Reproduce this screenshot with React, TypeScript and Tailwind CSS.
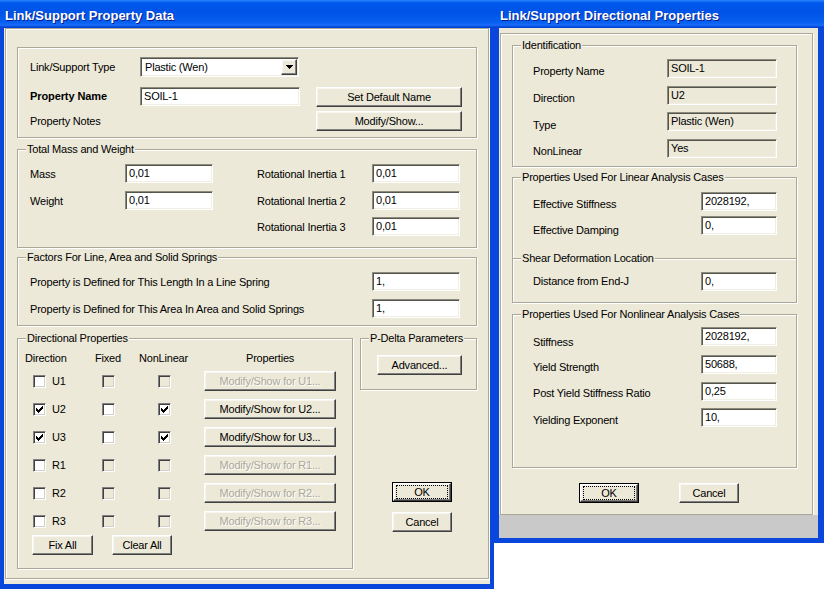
import React from 'react';

type Kids = { children?: React.ReactNode; className?: string };

// classic 7x7 check glyph
const Check = () => (
  <svg width="7" height="7" viewBox="0 0 7 7" className="block" shapeRendering="crispEdges">
    <path d="M0 2h1v3H0zM1 3h1v3H1zM2 4h1v3H2zM3 3h1v3H3zM4 2h1v3H4zM5 1h1v3H5zM6 0h1v3H6z" fill="#000" />
  </svg>
);

const CheckBox = ({ checked = false, disabled = false }: { checked?: boolean; disabled?: boolean }) => (
  <span
    className={`flex h-[13px] w-[13px] shrink-0 items-center justify-center border border-t-[#808080] border-l-[#808080] border-b-white border-r-white shadow-[inset_1px_1px_0_#404040,inset_-1px_-1px_0_#d4d0c8] ${
      disabled ? 'bg-[#ece9d8]' : 'bg-white'
    }`}
  >
    {checked && <Check />}
  </span>
);

const bevel =
  'border border-t-white border-l-white border-b-[#404040] border-r-[#404040] bg-[#ece9d8] shadow-[inset_-1px_-1px_0_#808080,inset_1px_1px_0_#f7f6f0]';

const Button = ({ children, className = '', disabled = false }: Kids & { disabled?: boolean }) => (
  <div className={`flex h-[20px] shrink-0 items-center justify-center ${bevel} ${className}`}>
    <span className={disabled ? 'text-[#aca899] [text-shadow:1px_1px_0_#fff]' : ''}>{children}</span>
  </div>
);

const DefaultButton = ({ children, className = '' }: Kids) => (
  <div className={`h-[20px] shrink-0 border border-black ${className}`}>
    <div className={`flex h-full w-full px-[2px] py-[1px] ${bevel}`}>
      <div className="flex flex-1 items-center justify-center border border-dotted border-black">{children}</div>
    </div>
  </div>
);

const TextBox = ({ value, className = '', readOnly = false }: { value: string; className?: string; readOnly?: boolean }) => (
  <div
    className={`flex h-[19px] shrink-0 items-center border border-t-[#8d8a7e] border-l-[#8d8a7e] border-b-white border-r-white pl-[3px] shadow-[inset_1px_1px_0_#55544d,inset_-1px_-1px_0_#f1efe2] ${
      readOnly ? 'bg-[#ece9d8]' : 'bg-white'
    } ${className}`}
  >
    {value}
  </div>
);

const Combo = ({ value }: { value: string }) => (
  <div className="flex h-[20px] w-[159px] items-center border border-t-[#8d8a7e] border-l-[#8d8a7e] border-b-white border-r-white bg-white p-[1px] shadow-[inset_1px_1px_0_#55544d,inset_-1px_-1px_0_#f1efe2]">
    <span className="flex-1 pl-[3px]">{value}</span>
    <div className={`flex h-[16px] w-[16px] items-center justify-center ${bevel}`}>
      <svg width="7" height="4" viewBox="0 0 7 4" shapeRendering="crispEdges" className="block">
        <path d="M0 0h7v1H0zM1 1h5v1H1zM2 2h3v1H2zM3 3h1v1H3z" fill="#000" />
      </svg>
    </div>
  </div>
);

const etched = 'border border-[#aca899] shadow-[1px_1px_0_#fff,inset_1px_1px_0_#fff]';

const Group = ({ title, className = '', children }: Kids & { title?: string }) => (
  <div className={`relative shrink-0 ${etched} ${className}`}>
    {title && <span className="absolute -top-[7px] left-[8px] bg-[#ece9d8] px-[1px] leading-[13px]">{title}</span>}
    {children}
  </div>
);

const TitleBar = ({ title, className = '' }: { title: string; className?: string }) => (
  <div
    className={`flex h-[28px] shrink-0 items-center pt-[2px] text-[13px] font-bold tracking-normal text-white [text-shadow:1px_1px_0_#0a1d8c] bg-[linear-gradient(180deg,#2a86ff_0%,#0058ee_10%,#0053e6_45%,#0760f0_80%,#1a6cf8_90%,#0048d8_96%,#003dc8_100%)] ${className}`}
  >
    {title}
  </div>
);

const dirRows = [
  { d: 'U1', on: false },
  { d: 'U2', on: true },
  { d: 'U3', on: true },
  { d: 'R1', on: false },
  { d: 'R2', on: false },
  { d: 'R3', on: false },
];

const LeftWindow = () => (
  <div className="flex h-[589px] w-[494px] shrink-0 flex-col bg-[#0846dc]">
    <TitleBar title="Link/Support Property Data" className="pl-[5px]" />
    <div className="mx-[4px] h-[556px] bg-[#ece9d8] pl-[1px]">
      <div className={`h-[551px] w-[484px] pl-[11px] pt-[18px] ${etched}`}>
        {/* type / name */}
        <Group className="h-[91px] w-[460px] pl-[12px] pt-[9px]">
          <div className="flex h-[20px] items-center">
            <span className="w-[110px]">Link/Support Type</span>
            <Combo value="Plastic (Wen)" />
          </div>
          <div className="mt-[10px] flex h-[20px] items-start">
            <span className="flex h-[19px] w-[110px] items-center font-bold tracking-[-0.1px]">Property Name</span>
            <TextBox value="SOIL-1" className="w-[160px]" />
            <Button className="ml-[16px] w-[146px]">Set Default Name</Button>
          </div>
          <div className="mt-[4px] flex h-[20px] items-center">
            <span className="w-[286px] pt-[1px]">Property Notes</span>
            <Button className="w-[146px]">Modify/Show...</Button>
          </div>
        </Group>

        {/* mass */}
        <Group title="Total Mass and Weight" className="mt-[11px] h-[99px] w-[460px] pl-[12px] pt-[14px]">
          {[
            ['Mass', '0,01', 'Rotational Inertia 1', '0,01'],
            ['Weight', '0,01', 'Rotational Inertia 2', '0,01'],
            ['', '', 'Rotational Inertia 3', '0,01'],
          ].map(([l, v, rl, rv], i) => (
            <div key={rl} className={`flex h-[19px] items-center ${i === 1 ? 'mt-[8px]' : i === 2 ? 'mt-[7px]' : ''}`}>
              <div className="flex w-[183px] items-center">
                {l && (
                  <>
                    <span className="w-[95px] pt-[2px]">{l}</span>
                    <TextBox value={v} className="w-[88px]" />
                  </>
                )}
              </div>
              <span className="ml-[44px] w-[115px] pt-[2px]">{rl}</span>
              <TextBox value={rv} className="w-[88px]" />
            </div>
          ))}
        </Group>

        {/* springs */}
        <Group title="Factors For Line, Area and Solid Springs" className="mt-[9px] h-[69px] w-[460px] pl-[12px] pt-[14px]">
          <div className="flex h-[19px] items-center">
            <span className="w-[342px] pt-[2px]">Property is Defined for This Length In a Line Spring</span>
            <TextBox value="1," className="w-[88px]" />
          </div>
          <div className="mt-[8px] flex h-[19px] items-center">
            <span className="w-[342px] pt-[2px]">Property is Defined for This Area In Area and Solid Springs</span>
            <TextBox value="1," className="w-[88px]" />
          </div>
        </Group>

        <div className="mt-[12px] flex items-start">
          <Group title="Directional Properties" className="h-[231px] w-[336px] pt-[12px]">
            <div className="flex h-[14px] items-center pl-[7px]">
              <span className="w-[70px]">Direction</span>
              <span className="w-[44px]">Fixed</span>
              <span className="w-[107px]">NonLinear</span>
              <span>Properties</span>
            </div>
            {dirRows.map((r, i) => (
              <div key={r.d} className={`flex h-[20px] items-center ${i === 0 ? 'mt-[6px]' : 'mt-[8px]'}`}>
                <span className="w-[15px]" />
                <CheckBox checked={r.on} />
                <span className="ml-[6px] w-[50px] pt-[1px]">{r.d}</span>
                <CheckBox disabled={!r.on} />
                <span className="w-[43px]" />
                <CheckBox checked={r.on} disabled={!r.on} />
                <span className="w-[33px]" />
                <Button className="w-[132px]" disabled={!r.on}>
                  Modify/Show for {r.d}...
                </Button>
              </div>
            ))}
            <div className="mt-[4px] flex pl-[14px]">
              <Button className="w-[61px]">Fix All</Button>
              <Button className="ml-[19px] w-[60px]">Clear All</Button>
            </div>
          </Group>

          <div className="ml-[7px] flex w-[117px] flex-col">
            <Group title="P-Delta Parameters" className="h-[52px] w-[117px] pl-[16px] pt-[16px]">
              <Button className="w-[85px]">Advanced...</Button>
            </Group>
            <DefaultButton className="ml-[32px] mt-[92px] w-[60px]">OK</DefaultButton>
            <Button className="ml-[32px] mt-[10px] w-[60px]">Cancel</Button>
          </div>
        </div>
      </div>
    </div>
  </div>
);

const RRow = ({
  label,
  value,
  first,
  mt,
  off,
  labelW,
  tbW,
  readOnly = false,
}: {
  label: string;
  value: string;
  first?: boolean;
  mt: string;
  off: string;
  labelW: string;
  tbW: string;
  readOnly?: boolean;
}) => (
  <div className={`flex h-[19px] items-start ${first ? '' : ''} ${mt}`}>
    <span className={`${labelW} ${off}`}>{label}</span>
    <TextBox value={value} className={tbW} readOnly={readOnly} />
  </div>
);

const RightWindow = () => (
  <div className="flex h-[543px] w-[330px] shrink-0 flex-col bg-[#0846dc]">
    <TitleBar title="Link/Support Directional Properties" className="pl-[6px]" />
    <div className="ml-[5px] mr-[6px] flex flex-col">
      <div className="h-[487px] bg-[#ece9d8] pl-[1px] pt-[5px]">
        <div className={`h-[482px] w-[313px] pl-[11px] pt-[11px] ${etched}`}>
          <Group title="Identification" className="h-[122px] w-[285px] pl-[20px]">
            <RRow label="Property Name" value="SOIL-1" mt="mt-[13px]" off="mt-[6px]" labelW="w-[134px]" tbW="w-[110px]" readOnly />
            <RRow label="Direction" value="U2" mt="mt-[8px]" off="mt-[6px]" labelW="w-[134px]" tbW="w-[110px]" readOnly />
            <RRow label="Type" value="Plastic (Wen)" mt="mt-[7px]" off="mt-[7px]" labelW="w-[134px]" tbW="w-[110px]" readOnly />
            <RRow label="NonLinear" value="Yes" mt="mt-[8px]" off="mt-[6px]" labelW="w-[134px]" tbW="w-[110px]" readOnly />
          </Group>

          <Group title="Properties Used For Linear Analysis Cases" className="mt-[10px] h-[81px] w-[285px] border-b-0 pl-[20px]">
            <RRow label="Effective Stiffness" value="2028192," mt="mt-[14px]" off="mt-[6px]" labelW="w-[168px]" tbW="w-[76px]" />
            <RRow label="Effective Damping" value="0," mt="mt-[5px]" off="mt-[8px]" labelW="w-[168px]" tbW="w-[76px]" />
          </Group>

          <Group title="Shear Deformation Location" className="h-[45px] w-[285px] pl-[20px]">
            <RRow label="Distance from End-J" value="0," mt="mt-[13px]" off="mt-[3px]" labelW="w-[168px]" tbW="w-[76px]" />
          </Group>

          <Group title="Properties Used For Nonlinear Analysis Cases" className="mt-[11px] h-[154px] w-[285px] pl-[20px]">
            <RRow label="Stiffness" value="2028192," mt="mt-[12px]" off="mt-[9px]" labelW="w-[168px]" tbW="w-[76px]" />
            <RRow label="Yield Strength" value="50688," mt="mt-[9px]" off="mt-[6px]" labelW="w-[168px]" tbW="w-[76px]" />
            <RRow label="Post Yield Stiffness Ratio" value="0,25" mt="mt-[8px]" off="mt-[5px]" labelW="w-[168px]" tbW="w-[76px]" />
            <RRow label="Yielding Exponent" value="10," mt="mt-[7px]" off="mt-[6px]" labelW="w-[168px]" tbW="w-[76px]" />
          </Group>

          <div className="ml-[67px] mt-[15px] flex">
            <DefaultButton className="w-[60px]">OK</DefaultButton>
            <Button className="ml-[40px] w-[60px]">Cancel</Button>
          </div>
        </div>
      </div>
      <div className="h-[23px] bg-[#c9c9c9]" />
    </div>
  </div>
);

export default function App() {
  return (
    <div className="flex h-[589px] w-[824px] items-start overflow-hidden bg-white font-['Liberation_Sans',Arial,sans-serif] text-[11px] leading-[13px] tracking-[-0.2px] text-black">
      <LeftWindow />
      <RightWindow />
    </div>
  );
}
